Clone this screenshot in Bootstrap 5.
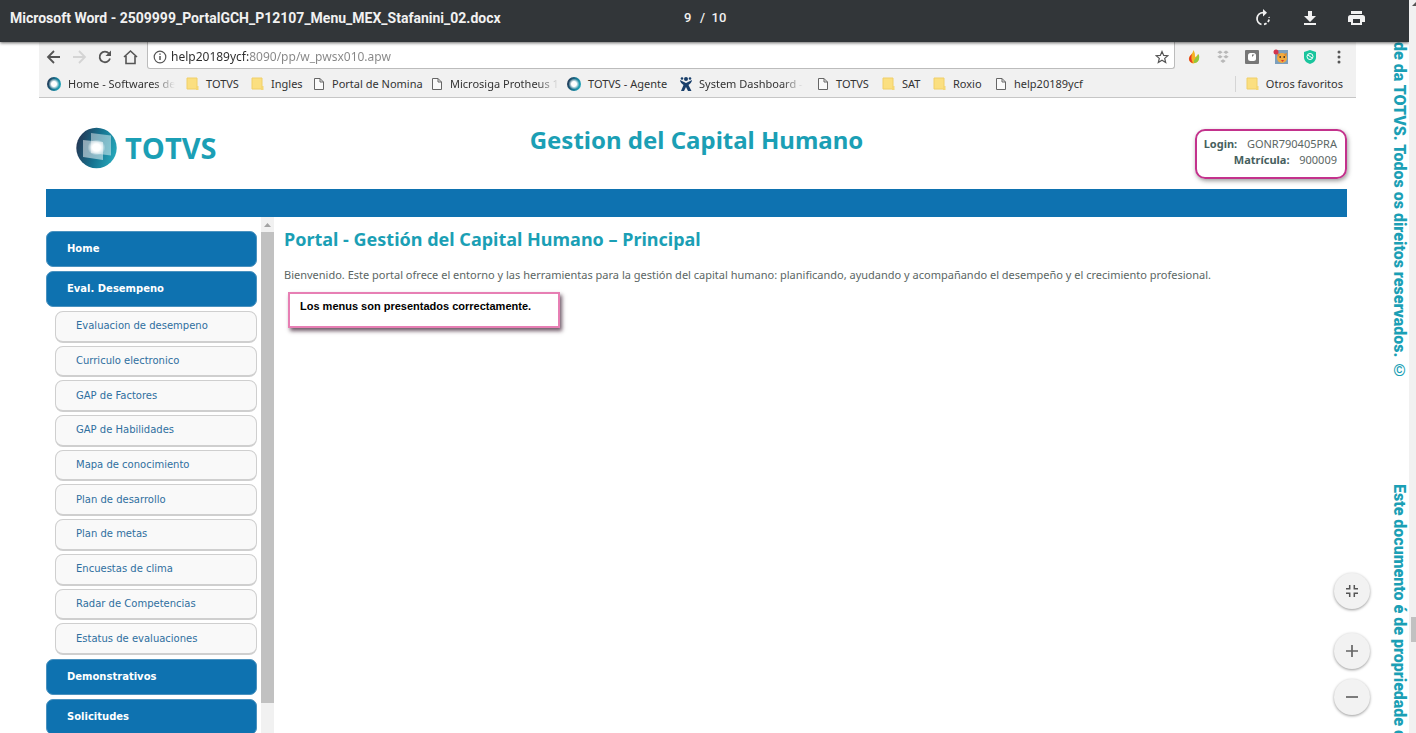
<!DOCTYPE html>
<html lang="es">
<head>
<meta charset="utf-8">
<meta name="viewport" content="width=device-width, initial-scale=1">
<title>Gestion del Capital Humano</title>
<link rel="stylesheet" href="https://cdn.jsdelivr.net/npm/bootstrap@5.3.0/dist/css/bootstrap.min.css">
<style>
  :root { --brand: #0e72b0; --aqua: #1b9fb5; --chrome: #f1f1f1; --edge: #c6c6c6; }
  body { font-family: "DejaVu Sans", sans-serif; font-size: 11px; line-height: 16px; color: #5b6664; background: #fff; }
  svg { display: block; flex: none; }
  button { border: 0; background: none; padding: 0; }
  a { text-decoration: none; color: inherit; }

  .viewer-bar { height: 42px; background: #323639; color: #f1f1f1; font: bold 14px/36px Roboto, sans-serif; padding: 0 42px 6px 10px; box-shadow: 0 1px 3px rgba(0,0,0,.6); z-index: 3; }
  .viewer-bar > * { flex: 1 1 0; }
  .viewer-pages { font-size: 13px; font-weight: 500; padding-right: 48px; }
  .page-no { width: 12px; border: 0; padding: 0; background: none; color: inherit; font-weight: 500; }
  .tools { gap: 23px; color: #f1f1f1; }
  .tools button { color: inherit; }

  .sheet { padding-left: 39px; }
  .address-row { height: 27px; padding: 0 9px 0 7px; background: var(--chrome); color: #555; }
  .address { border: 1px solid #bcbcbc; border-top: 0; border-radius: 0 0 3px 3px; background: #fff; padding: 4px 5px 0; margin: 0 11px 0 0; height: 27px; }
  .address input { border: 0; padding: 0; outline: 0; height: 20px; font: 12px/20px "Noto Sans", sans-serif; color: transparent;
    background: linear-gradient(90deg, #2b2b2b 78px, #858585 78px); background-clip: text; -webkit-background-clip: text; }
  .nav-icons, .extensions { padding-top: 3px; }
  .extensions { gap: 13px; }
  .bookmarks { height: 29px; padding: 2px 13px 0 7px; background: var(--chrome); border-bottom: 1px solid var(--edge); font: 11px/16px "Noto Sans", sans-serif; color: #333; }
  .marks { display: grid; grid-template-columns: 140px 65px 61px 118px 136px 113px 137px 66px 51px 61px auto; }
  .marks a, .others { display: flex; align-items: center; gap: 6px; white-space: nowrap; }
  .fade-end { -webkit-mask-image: linear-gradient(90deg, #000 80%, transparent); mask-image: linear-gradient(90deg, #000 80%, transparent); }
  .others { border-left: 1px solid #d5d5d5; padding-left: 10px; }

  .portal { padding: 0 9px 0 7px; }
  .portal-head { height: 91px; display: grid; grid-template-columns: 1fr auto 1fr; align-items: start; }
  .logo { margin: 29px 0 0 30px; gap: 8px; color: var(--aqua); font: bold 29px/40px "Open Sans", sans-serif; }
  .portal-title { margin: 28px 0 0; font: bold 24px/28px "Noto Sans", sans-serif; color: var(--aqua); }
  .login-box { justify-self: end; margin-top: 31px; padding: 5px 8px 9px 7px; border: 2px solid #c3328c; border-radius: 10px; text-align: right; box-shadow: 1px 2px 4px rgba(60,60,60,.5); font-family: "Noto Sans", sans-serif; }
  .login-box b { color: #46605e; margin-right: 4px; }
  .ribbon { height: 28px; background: var(--brand); }

  .side { width: 211px; padding-top: 14px; gap: 4px; }
  .menu-main { height: 36px; line-height: 34px; padding: 0 20px; border-radius: 7px; background: var(--brand); border: 1px solid #4b92bf; color: #fff; font-weight: bold; }
  .side, .menu-sub { font-size: 10px; }
  .submenu { height: 344px; gap: 3px; margin: 0 0 0 9px; }
  .menu-sub { flex: 1; display: flex; align-items: center; padding: 0 20px; color: #2f6f9f; background: #f9f9f9; border: 1px solid #cfcfcf; border-bottom-width: 2px; border-radius: 8px; }
  .side-scroll { width: 13px; margin: 0 10px 0 4px; background: var(--chrome); }
  .side-thumb { height: 471px; background: #c1c1c1; }
  .side-arrow { height: 15px; padding: 6px 0 0 3px; }

  .content-title { margin: 10px 0 16px; font: bold 18px/24px "Noto Sans", sans-serif; color: var(--aqua); }
  .welcome { font: 11px/16px "Noto Sans", sans-serif; margin: 0 0 9px; }
  .callout-note { display: inline-block; margin-left: 4px; padding: 4px 27px 12px 10px; border: 2px solid #e77fb4; background: #fff; color: #000; font: bold 11px/16px "Liberation Sans", sans-serif; box-shadow: 2px 3px 4px rgba(50,20,40,.7); }

  .margin-note { width: 53px; overflow: hidden; }
  .margin-note div { writing-mode: vertical-rl; white-space: nowrap; color: var(--aqua); font: 900 16px/20px Roboto, sans-serif; margin-left: 33px; }
  .note-a { height: 442px; }
  .page-scroll { width: 7px; background: var(--chrome); }
  .page-thumb { position: absolute; top: 617px; right: 0; width: 5px; height: 25px; background: #c1c1c1; }

  .zoomers { position: fixed; right: 46px; bottom: 18px; gap: 10px; z-index: 4; }
  .zoomers button { width: 36px; height: 36px; border-radius: 50%; background: #f2f2f2; box-shadow: 0 1px 3px rgba(0,0,0,.4); display: grid; place-items: center; }
  .zoomers .fit { margin-bottom: 14px; }
</style>
</head>
<body class="vh-100 overflow-hidden d-flex">

<svg width="0" height="0" class="position-absolute" aria-hidden="true">
  <defs>
    <linearGradient id="globe" x1="0" x2="1" y1=".2" y2=".5"><stop offset="0" stop-color="#25324f"/><stop offset=".55" stop-color="#167390"/><stop offset="1" stop-color="#25a5b8"/></linearGradient>
    <radialGradient id="glow"><stop offset=".45" stop-color="#fff"/><stop offset="1" stop-color="#fff" stop-opacity="0"/></radialGradient>
    <symbol id="i-folder" viewBox="0 0 14 14"><path d="M1 1h10v11H1z" fill="#fbdf80" stroke="#f0cf68"/><path d="M10 9h2.500v4h-2.500z" fill="#f5d774"/></symbol>
    <symbol id="i-page" viewBox="0 0 14 14"><path d="M2.500 1.500h5.500l3.500 3.500v7.500h-9zM8 1.500v3.500h3.500" fill="#fafafa" stroke="#666"/></symbol>
    <symbol id="i-ring" viewBox="0 0 16 16"><circle cx="8" cy="8" r="7" fill="url(#globe)"/><circle cx="8" cy="8" r="5.500" fill="url(#glow)"/></symbol>
  </defs>
</svg>

<div class="d-flex flex-column flex-grow-1 overflow-hidden">
  <header class="viewer-bar d-flex align-items-center position-relative">
    <div class="text-nowrap">Microsoft Word - 2509999_PortalGCH_P12107_Menu_MEX_Stafanini_02.docx</div>
    <div class="viewer-pages d-flex justify-content-center align-items-center"><input class="page-no" value="9" aria-label="Página"><span class="ms-1">/&nbsp; 10</span></div>
    <div class="tools d-flex justify-content-end align-items-center">
      <button type="button" aria-label="Girar"><svg width="24" height="18" viewBox="0 0 24 18" fill="none" stroke="currentColor" stroke-width="1.800"><path d="M15 3.700h-1A6 6 0 0 0 12.500 15.500"/><path d="M15 15.300a6 6 0 0 0 5-7.300" stroke-dasharray="2.800 1.700"/><path d="M14 0v7.400l4-3.700z" fill="currentColor" stroke="none"/></svg></button>
      <button type="button" aria-label="Descargar"><svg width="24" height="18" viewBox="0 0 24 18" fill="currentColor"><path d="M12 2h4v5h4l-6 6-6-6h4zM8 14h12v2H8z"/></svg></button>
      <button type="button" aria-label="Imprimir"><svg width="24" height="18" viewBox="0 0 24 18" fill="currentColor"><path d="M8 2h11v3H8zM7.500 6h12a2.500 2.500 0 0 1 2.500 2.500V13h-3v3H8v-3H5V8.500A2.500 2.500 0 0 1 7.500 6zM10 10v4h7v-4z" fill-rule="evenodd"/></svg></button>
    </div>
  </header>

  <div class="d-flex flex-grow-1 overflow-hidden">
    <div class="sheet flex-grow-1 overflow-hidden d-flex flex-column">
      <div class="address-row d-flex align-items-center">
        <svg class="nav-icons" width="101" height="27" viewBox="0 0 101 24" fill="none" stroke="#555" stroke-width="1.800">
          <path d="M14 12H2M8 6l-6 6 6 6"/><path d="M27 12h12M33 6l6 6-6 6" stroke="#d4d4d4"/>
          <path d="M63 8.500a5.300 5.300 0 1 0 1 5"/><path d="M65 5.500v5.500h-5.500z" fill="#555" stroke="none"/>
          <path d="M78 12l6.500-6 6.500 6M80 11v7.500h9V11" stroke-width="1.600"/>
        </svg>
        <div class="address d-flex align-items-center flex-grow-1">
          <svg width="14" height="14" viewBox="0 0 14 14" fill="none" stroke="#555" class="me-1"><circle cx="7" cy="7" r="5.800" stroke-width="1.200"/><path d="M7 6v4M7 3.500v1.300" stroke-width="1.500"/></svg>
          <input class="flex-grow-1" value="help20189ycf:8090/pp/w_pwsx010.apw" aria-label="Dirección">
          <svg width="14" height="14" viewBox="0 0 14 14" fill="none" stroke="#555" stroke-width="1.200"><path d="M7 1.500l1.700 3.900 4.200.3-3.200 2.700 1 4.100L7 10.300l-3.700 2.200 1-4.100L1.100 5.700l4.200-.3z"/></svg>
        </div>
        <div class="extensions d-flex align-items-center">
          <svg width="16" height="16" viewBox="0 0 16 16"><path d="M7 1C8 5 2 6 3 11c1 3 4 4 6 3 4-1 5-5 3-9-1 2-2 3-3 3 0-3 0-5-2-7z" fill="#f5b323"/><path d="M6 5c-4 3-4 8 1 9-2-3-2-6-1-9z" fill="#e5352b"/><path d="M12.500 5c2 4 0 9-4.500 9-1-4 3-5 4.500-9z" fill="#91c93e"/></svg>
          <svg width="16" height="16" viewBox="0 0 16 16" fill="#b8b8b8"><path d="M5 1.500l2.700 1.800L5 5.100 2.300 3.300zM11 1.500l2.700 1.800L11 5.100 8.300 3.300zM5 6l2.700 1.800L5 9.600 2.300 7.800zM11 6l2.700 1.800L11 9.600 8.300 7.800zM8 10.300l2.700 1.800L8 14l-2.700-1.900z"/></svg>
          <svg width="16" height="16" viewBox="0 0 16 16"><rect x="1" y="1" width="14" height="14" rx="1" fill="#777"/><rect x="4" y="4" width="8" height="8" rx="2.500" fill="#fff"/><path d="M8 8V5.500h2.500z" fill="#777"/></svg>
          <svg width="16" height="16" viewBox="0 0 16 16"><rect x="2" y="1" width="13" height="14" fill="#7da0bd"/><circle cx="9" cy="9" r="5" fill="#f2aa3e"/><path d="M4 4l3 1-2 3zM14 4l-3 1 2 3z" fill="#e68a24"/><path d="M6.500 8h1.500M10.500 8H12" stroke="#222" stroke-width="1.500"/><path d="M8 11h3l-1.500 2z" fill="#d33"/><circle cx="3" cy="3" r="2.500" fill="#d3354d"/></svg>
          <svg width="16" height="16" viewBox="0 0 16 16"><path d="M8 1l6 2v5c0 4-3 6-6 7-3-1-6-3-6-7V3z" fill="#19c59d"/><circle cx="8" cy="7.500" r="3" fill="none" stroke="#fff"/><path d="M6 6l4 3" stroke="#fff"/></svg>
          <svg width="16" height="16" viewBox="0 0 16 16" fill="#555"><circle cx="8" cy="3" r="1.500"/><circle cx="8" cy="8" r="1.500"/><circle cx="8" cy="13" r="1.500"/></svg>
        </div>
      </div>

      <div class="bookmarks d-flex align-items-center justify-content-between">
        <nav class="marks" aria-label="Favoritos">
          <a href="#"><svg width="16" height="16"><use href="#i-ring"/></svg><span class="fade-end">Home - Softwares de</span></a>
          <a href="#"><svg width="14" height="14"><use href="#i-folder"/></svg>TOTVS</a>
          <a href="#"><svg width="14" height="14"><use href="#i-folder"/></svg>Ingles</a>
          <a href="#"><svg width="14" height="14"><use href="#i-page"/></svg>Portal de Nomina</a>
          <a href="#"><svg width="14" height="14"><use href="#i-page"/></svg><span class="fade-end">Microsiga Protheus 1</span></a>
          <a href="#"><svg width="16" height="16"><use href="#i-ring"/></svg>TOTVS - Agente</a>
          <a href="#"><svg width="14" height="16" viewBox="0 0 14 16" fill="#193f6b"><circle cx="7" cy="3" r="2"/><circle cx="3" cy="2.500" r="1.300"/><circle cx="11" cy="2.500" r="1.300"/><path d="M1 4l6 3 6-3c0 2-2 4-3.500 5l3 6H9l-2-4-2 4H2l2.500-6C3 8 1 6 1 4z"/></svg><span class="fade-end">System Dashboard -</span></a>
          <a href="#"><svg width="14" height="14"><use href="#i-page"/></svg>TOTVS</a>
          <a href="#"><svg width="14" height="14"><use href="#i-folder"/></svg>SAT</a>
          <a href="#"><svg width="14" height="14"><use href="#i-folder"/></svg>Roxio</a>
          <a href="#"><svg width="14" height="14"><use href="#i-page"/></svg>help20189ycf</a>
        </nav>
        <a href="#" class="others"><svg width="14" height="14"><use href="#i-folder"/></svg>Otros favoritos</a>
      </div>

      <div class="portal flex-grow-1 d-flex flex-column overflow-hidden">
        <div class="portal-head flex-shrink-0">
          <div class="logo d-flex align-items-center">
            <svg width="41" height="42" viewBox="0 0 41 42"><circle cx="20.500" cy="21" r="20.200" fill="url(#globe)"/><path d="M15 6l20 2.500v20L15 26z" fill="#fff" fill-opacity=".45"/><path d="M7 13l20 2v18L7 30z" fill="#fff" fill-opacity=".5"/><ellipse cx="20.500" cy="20.500" rx="9" ry="8" fill="url(#glow)"/></svg>
            <span>TOTVS</span>
          </div>
          <h1 class="portal-title">Gestion del Capital Humano</h1>
          <div class="login-box"><div><b>Login:</b>&nbsp; GONR790405PRA</div><div><b>Matrícula:</b>&nbsp; 900009</div></div>
        </div>
        <div class="ribbon flex-shrink-0"></div>

        <div class="d-flex flex-grow-1 overflow-hidden">
          <nav class="side d-flex flex-column flex-shrink-0" aria-label="Menú">
            <a href="#" class="menu-main flex-shrink-0">Home</a>
            <a href="#" class="menu-main flex-shrink-0">Eval. Desempeno</a>
            <div class="submenu d-flex flex-column flex-shrink-0">
              <a href="#" class="menu-sub">Evaluacion de desempeno</a>
              <a href="#" class="menu-sub">Curriculo electronico</a>
              <a href="#" class="menu-sub">GAP de Factores</a>
              <a href="#" class="menu-sub">GAP de Habilidades</a>
              <a href="#" class="menu-sub">Mapa de conocimiento</a>
              <a href="#" class="menu-sub">Plan de desarrollo</a>
              <a href="#" class="menu-sub">Plan de metas</a>
              <a href="#" class="menu-sub">Encuestas de clima</a>
              <a href="#" class="menu-sub">Radar de Competencias</a>
              <a href="#" class="menu-sub">Estatus de evaluaciones</a>
            </div>
            <a href="#" class="menu-main flex-shrink-0">Demonstrativos</a>
            <a href="#" class="menu-main flex-shrink-0">Solicitudes</a>
          </nav>
          <div class="side-scroll flex-shrink-0">
            <div class="side-arrow"><svg width="7" height="4" viewBox="0 0 7 4"><path d="M0 4l3.500-4L7 4z" fill="#a3a3a3"/></svg></div>
            <div class="side-thumb"></div>
          </div>
          <main class="flex-grow-1">
            <h2 class="content-title">Portal - Gestión del Capital Humano – Principal</h2>
            <p class="welcome">Bienvenido. Este portal ofrece el entorno y las herramientas para la gestión del capital humano: planificando, ayudando y acompañando el desempeño y el crecimiento profesional.</p>
            <div class="callout-note">Los menus son presentados correctamente.</div>
          </main>
        </div>
      </div>
    </div>

    <aside class="margin-note flex-shrink-0">
      <div class="note-a">de da TOTVS. Todos os direitos reservados. ©</div>
      <div>Este documento é de propriedade d</div>
    </aside>
  </div>
</div>

<div class="page-scroll flex-shrink-0 position-relative">
  <svg width="7" height="9" viewBox="0 0 7 9"><path d="M3 6l4-4v4z" fill="#555"/></svg>
  <div class="page-thumb"></div>
</div>

<div class="zoomers d-flex flex-column">
  <button type="button" class="fit" aria-label="Ajustar a la página"><svg width="12" height="12" viewBox="0 0 12 12" fill="none" stroke="#555" stroke-width="1.500"><path d="M3.700 0v3.700H0M8.300 0v3.700H12M3.700 12V8.300H0M8.300 12V8.300H12"/></svg></button>
  <button type="button" aria-label="Acercar"><svg width="12" height="12" viewBox="0 0 12 12" stroke="#666" stroke-width="1.700"><path d="M6 0v12M0 6h12"/></svg></button>
  <button type="button" aria-label="Alejar"><svg width="12" height="12" viewBox="0 0 12 12" stroke="#666" stroke-width="1.700"><path d="M0 6h12"/></svg></button>
</div>

<script src="https://cdn.jsdelivr.net/npm/bootstrap@5.3.0/dist/js/bootstrap.bundle.min.js"></script>
</body>
</html>
